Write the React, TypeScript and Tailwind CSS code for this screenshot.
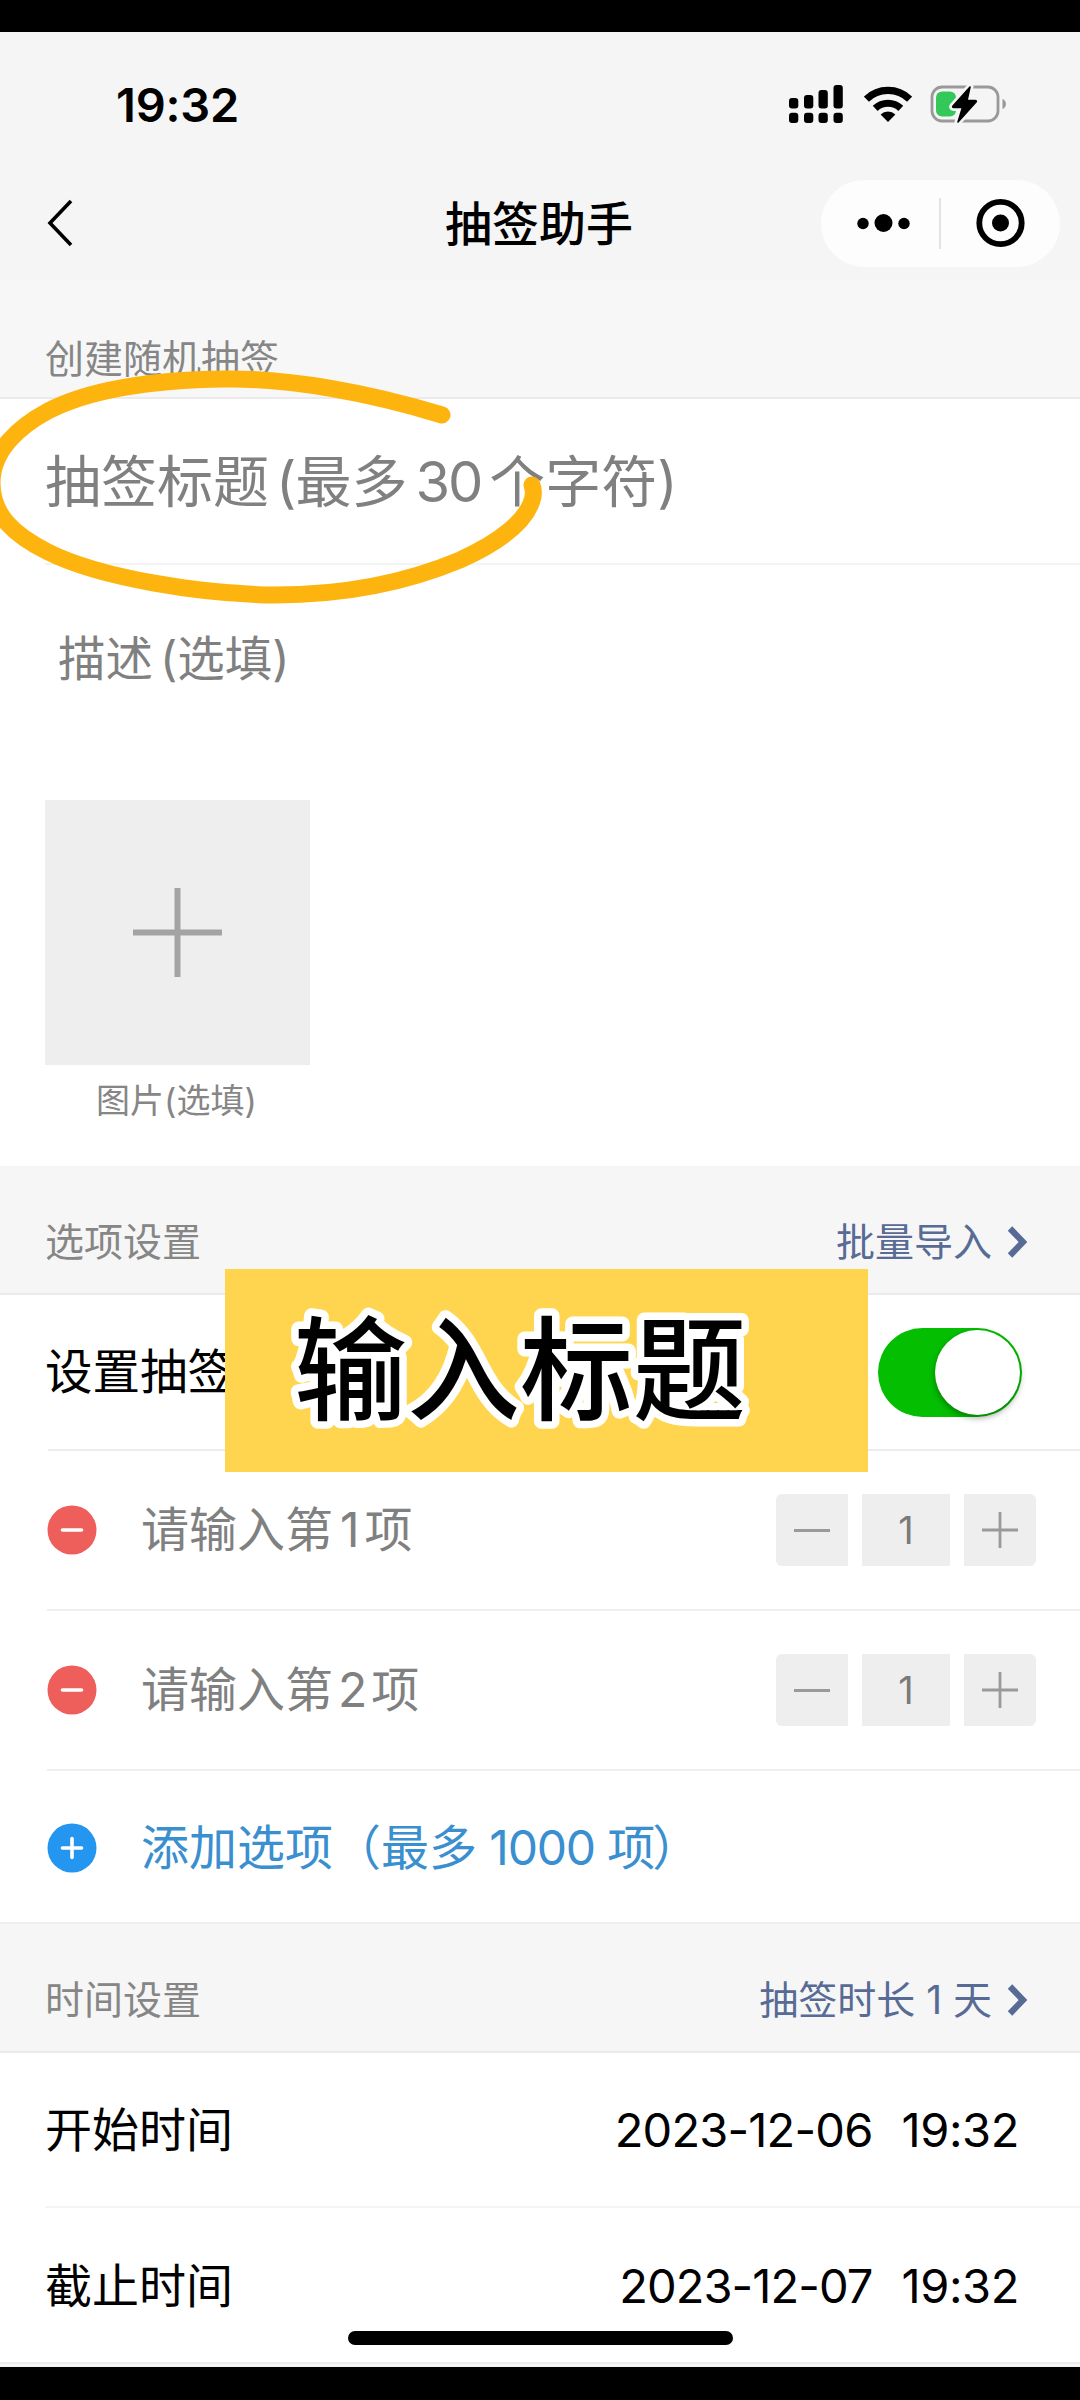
import { useState } from "react";
import type { ReactNode } from "react";

const OPTIONS = [
  { id: 1, label: ["请输入第", "1", "项"], numClass: "ml-[7px] mr-[5px]" },
  { id: 2, label: ["请输入第", "2", "项"], numClass: "ml-[5px] mr-[4px]" },
] as const;

function SignalIcon() {
  const bars = [
    { x: 0, y: 13 },
    { x: 15, y: 10 },
    { x: 29.5, y: 5 },
    { x: 44.5, y: 0 },
  ];
  return (
    <svg width="54" height="38" viewBox="0 0 54 38" aria-hidden>
      {bars.map((b) => (
        <g key={b.x}>
          <rect x={b.x} y={b.y} width="9.3" height={23.5 - b.y} rx="3" />
          <rect x={b.x} y="27.8" width="9.3" height="10.2" rx="3" />
        </g>
      ))}
    </svg>
  );
}

function WifiIcon() {
  return (
    <svg width="48" height="38" viewBox="0 0 48 38" aria-hidden>
      <path d="M2.4 14.2A31 31 0 0 1 45.6 14.2" fill="none" stroke="#000" strokeWidth="7.2" />
      <path d="M11.2 23.4A18.5 18.5 0 0 1 36.8 23.4" fill="none" stroke="#000" strokeWidth="7" />
      <path d="M24 37L16.6 29.4A11 11 0 0 1 31.4 29.4Z" />
    </svg>
  );
}

function BatteryIcon() {
  return (
    <svg width="80" height="42" viewBox="0 0 80 42" aria-hidden>
      <rect x="3" y="4" width="66" height="34" rx="10" fill="none" stroke="#999" strokeWidth="2.8" />
      <path d="M73.5 16c4.6 1.8 4.6 8.2 0 10z" fill="#999" />
      <rect x="7" y="8.5" width="20" height="25" rx="6" fill="#34c759" />
      <path
        d="M41 4L24 23q-1 1.500 1 1.500h8.500L29 39 47 19q1-1.500-1-1.500H38Z"
        stroke="#f5f5f5"
        strokeWidth="7"
        strokeLinejoin="round"
      />
      <path
        d="M41 4L24 23q-1 1.500 1 1.500h8.500L29 39 47 19q1-1.500-1-1.500H38Z"
        stroke="#000"
        strokeWidth="1.6"
        strokeLinejoin="round"
      />
    </svg>
  );
}

function Chevron() {
  return (
    <svg width="22" height="34" viewBox="0 0 22 34" fill="none" aria-hidden>
      <path d="M4 3.500L17 17 4 30.500" stroke="#576b95" strokeWidth="6.2" />
    </svg>
  );
}

function SectionHeader({ title, children }: { title: string; children?: ReactNode }) {
  return (
    <div className="flex h-[129px] items-end justify-between border-b-2 border-[#ebebeb] bg-[#f6f6f6] pr-[52px] pb-[31px] pl-[45px] text-[39px] leading-[40px] text-[#868686]">
      <span>{title}</span>
      {children ? <span className="flex items-center text-[#576b95]">{children}</span> : null}
    </div>
  );
}

function Stepper() {
  const [count, setCount] = useState(1);
  return (
    <div className="flex items-center gap-[14px]">
      <button
        type="button"
        aria-label="减少"
        className="flex h-[72px] w-[72px] items-center justify-center rounded-l-md bg-[#eeeeee]"
        onClick={() => setCount((c) => Math.max(1, c - 1))}
      >
        <span className="h-[3px] w-9 bg-[#9a9a9a]" />
      </button>
      <span className="flex h-[72px] w-[88px] items-center justify-center bg-[#eeeeee] text-[38px] leading-none text-[#7a7a7a]">
        {count}
      </span>
      <button
        type="button"
        aria-label="增加"
        className="flex h-[72px] w-[72px] items-center justify-center rounded-r-md bg-[#eeeeee]"
        onClick={() => setCount((c) => c + 1)}
      >
        <svg width="36" height="36" viewBox="0 0 36 36" stroke="#9a9a9a" strokeWidth="2.8" aria-hidden>
          <path d="M18 0V36M0 18H36" />
        </svg>
      </button>
    </div>
  );
}

function RoundIcon({ kind }: { kind: "minus" | "plus" }) {
  return (
    <svg width="50" height="50" viewBox="0 0 50 50" aria-hidden>
      <circle cx="25" cy="25" r="24.500" fill={kind === "minus" ? "#ee5f5c" : "#2496f0"} />
      <path
        d={kind === "minus" ? "M15.500 25H34.500" : "M15.500 25H34.500M25 15.500V34.500"}
        stroke="#fff"
        strokeWidth="3.600"
        strokeLinecap="round"
      />
    </svg>
  );
}

export default function App() {
  const [on, setOn] = useState(true);

  return (
    <div className="relative h-[2400px] w-[1080px] overflow-hidden bg-white font-[Inter,'Noto_Sans_CJK_SC',sans-serif] text-black">
      <div className="h-8 bg-black" />

      <header className="h-[248px] bg-[#f5f5f5]">
        <div className="flex h-[144px] items-center justify-between pr-[71px] pl-[116px]">
          <span className="text-[47px] leading-none font-semibold tracking-[-0.2px]">19:32</span>
          <div className="flex items-center">
            <SignalIcon />
            <span className="w-[21px]" />
            <WifiIcon />
            <span className="w-[17px]" />
            <BatteryIcon />
          </div>
        </div>
        <div className="grid h-[94px] grid-cols-3 items-center pr-5 pl-[45px]">
          <button type="button" aria-label="返回" className="justify-self-start">
            <svg width="30" height="50" viewBox="0 0 30 50" fill="none" aria-hidden>
              <path d="M26 3L5 25 26 47" stroke="#000" strokeWidth="3.600" />
            </svg>
          </button>
          <h1 className="ml-[-27px] justify-self-center text-[47px] leading-none font-medium whitespace-nowrap">
            抽签助手
          </h1>
          <div className="flex h-[87px] w-[239px] items-center justify-self-end rounded-full bg-[#fdfdfd]">
            <svg width="118" height="24" viewBox="0 0 118 24" aria-hidden>
              <circle cx="42" cy="12.500" r="5.700" />
              <circle cx="62.500" cy="12" r="9" />
              <circle cx="83" cy="12.500" r="5.700" />
            </svg>
            <span className="h-[51px] w-[2px] bg-[#e3e3e3]" />
            <svg width="118" height="50" viewBox="0 0 118 50" aria-hidden>
              <circle cx="59.500" cy="25" r="21.200" fill="none" stroke="#000" strokeWidth="5.800" />
              <circle cx="59.500" cy="25" r="8.500" />
            </svg>
          </div>
        </div>
      </header>

      <div className="flex h-[119px] items-end border-b-2 border-[#ebebeb] bg-[#f7f7f7] pb-[18px] pl-[45px] text-[39px] leading-[40px] text-[#868686]">
        创建随机抽签
      </div>

      <div className="ml-[45px] flex h-[166px] items-center border-b-2 border-[#f3f3f3] pt-[2px] text-[56px] leading-none whitespace-nowrap text-[#808080]">
        <span>抽签标题</span>
        <span className="ml-[7px]">(</span>
        <span className="ml-[-1px]">最多</span>
        <span className="mr-[8px] ml-[8px] tracking-[-2px]">30</span>
        <span>个字符)</span>
      </div>

      <div className="flex h-[235px] items-start pt-[69px] pl-[58px] text-[47.500px] leading-[50px] text-[#808080]">
        <span>描述</span>
        <span className="ml-[7px]">(选填)</span>
      </div>

      <div className="ml-[45px] flex h-[366px] w-[265px] flex-col items-center">
        <button type="button" aria-label="添加图片" className="flex h-[265px] w-[265px] items-center justify-center bg-[#eeeeee]">
          <svg width="89" height="89" viewBox="0 0 89 89" stroke="#a3a3a3" strokeWidth="6" aria-hidden>
            <path d="M44.500 0V89M0 44.500H89" />
          </svg>
        </button>
        <span className="mt-[16px] mr-[2px] text-[34px] leading-[40px] text-[#868686]">图片(选填)</span>
      </div>

      <SectionHeader title="选项设置">
        批量导入
        <span className="w-[14px]" />
        <Chevron />
      </SectionHeader>

      <div className="ml-[48px] flex h-[156px] items-center justify-between border-b-2 border-[#ededed] pr-[58px]">
        <span className="ml-[-3px] text-[47.500px] leading-none">设置抽签</span>
        <button
          type="button"
          role="switch"
          aria-checked={on}
          aria-label="设置抽签"
          className={`flex h-[89px] w-[144px] items-center rounded-full p-[2px] ${on ? "justify-end bg-[#04be02]" : "justify-start bg-[#dfdfdf]"}`}
          onClick={() => setOn((v) => !v)}
        >
          <span className="h-[85px] w-[85px] rounded-full bg-white shadow-[0_3px_6px_rgba(0,0,0,0.35)]" />
        </button>
      </div>

      {OPTIONS.map((option) => (
        <div key={option.id} className="ml-[47px] flex h-[160px] items-center border-b-2 border-[#efefef] pr-[44px]">
          <RoundIcon kind="minus" />
          <span className="ml-[44px] flex flex-1 text-[48px] leading-none text-[#808080]">
            {option.label[0]}
            <span className={option.numClass}>{option.label[1]}</span>
            {option.label[2]}
          </span>
          <Stepper />
        </div>
      ))}

      <div className="flex h-[153px] items-center border-b-2 border-[#efefef] pt-[2px] pl-[47px] text-[#3a8fd0]">
        <RoundIcon kind="plus" />
        <span className="ml-[44px] flex text-[48px] leading-none whitespace-pre">
          添加选项（最多
          <span className="tracking-[-1.2px]"> 1000 </span>项<span className="-ml-[3px]">）</span>
        </span>
      </div>

      <SectionHeader title="时间设置">
        <span className="whitespace-pre">抽签时长 1 天</span>
        <span className="w-[14px]" />
        <Chevron />
      </SectionHeader>

      <div className="ml-[45px] flex h-[155px] items-center justify-between border-b-2 border-[#f4f4f4] pr-[61px] text-[47px] leading-none">
        <span>开始时间</span>
        <span className="flex gap-[29px]">
          <span className="tracking-[-0.8px]">2023-12-06</span>
          <span className="tracking-[-0.4px]">19:32</span>
        </span>
      </div>
      <div className="ml-[45px] flex h-[154px] items-center justify-between pr-[61px] text-[47px] leading-none">
        <span>截止时间</span>
        <span className="flex gap-[29px]">
          <span className="tracking-[-0.9px]">2023-12-07</span>
          <span className="tracking-[-0.4px]">19:32</span>
        </span>
      </div>
      <div className="h-[5px] border-t-2 border-[#ececec] bg-[#f6f6f6]" />
      <div className="h-[40px] bg-black" />

      {/* home indicator */}
      <div className="absolute top-[2331px] left-[348px] h-[14px] w-[385px] rounded-full bg-black" />

      {/* hand-drawn highlight around the title field */}
      <svg className="absolute top-[360px] left-0" width="560" height="260" viewBox="0 360 560 260" fill="none" aria-hidden>
        <path
          d="M442 415C370 393 290 378 225 379C145 380 85 392 48 411C20 426 -8 450 -8 483C-8 515 14 535 48 552C100 578 200 594 275 595C350 595 410 581 460 560C500 542 528 520 533 497C534 490 532 485 532 485"
          stroke="#feb40e"
          strokeWidth="17"
          strokeLinecap="round"
          strokeLinejoin="round"
        />
      </svg>

      {/* step caption */}
      <div className="absolute top-[1269px] left-[225px] h-[203px] w-[643px] bg-[#ffd54f]">
        <svg width="643" height="203" viewBox="0 0 643 203" aria-hidden>
          <text
            x="69"
            y="142"
            className="fill-black stroke-white text-[113px] font-medium [paint-order:stroke]"
            strokeWidth="15"
            strokeLinejoin="round"
          >
            输入标题
          </text>
        </svg>
      </div>
    </div>
  );
}
